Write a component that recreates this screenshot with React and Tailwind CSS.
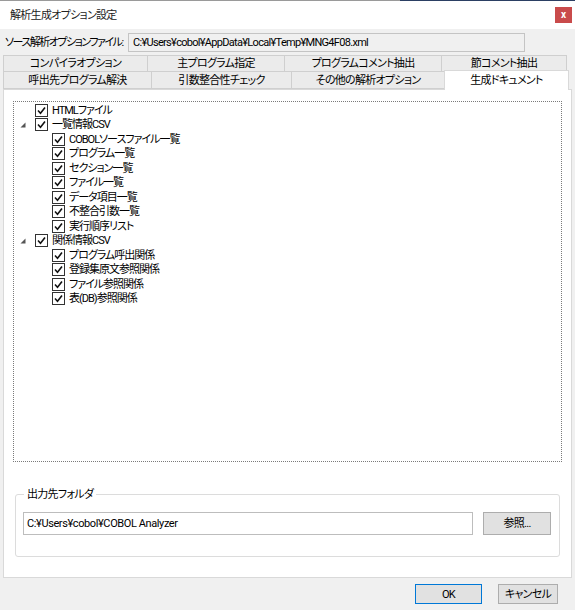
import React from 'react';

const tabsTop = [
  { label: 'コンパイラオプション', w: 'w-[145px]' },
  { label: '主プログラム指定', w: 'w-[138px]' },
  { label: 'プログラムコメント抽出', w: 'w-[158px]' },
  { label: '節コメント抽出', w: 'w-[126px]' },
];

const tabsBottom = [
  { label: '呼出先プログラム解決', w: 'w-[149px]' },
  { label: '引数整合性チェック', w: 'w-[141px]' },
  { label: 'その他の解析オプション', w: 'w-[154px]' },
];

const tree = [
  { label: 'HTMLファイル', level: 0 },
  { label: '一覧情報CSV', level: 0, open: true },
  { label: 'COBOLソースファイル一覧', level: 1 },
  { label: 'プログラム一覧', level: 1 },
  { label: 'セクション一覧', level: 1 },
  { label: 'ファイル一覧', level: 1 },
  { label: 'データ項目一覧', level: 1 },
  { label: '不整合引数一覧', level: 1 },
  { label: '実行順序リスト', level: 1 },
  { label: '関係情報CSV', level: 0, open: true },
  { label: 'プログラム呼出関係', level: 1 },
  { label: '登録集原文参照関係', level: 1 },
  { label: 'ファイル参照関係', level: 1 },
  { label: '表(DB)参照関係', level: 1 },
];

function CheckBox() {
  return (
    <svg width="13" height="13" viewBox="0 0 13 13" className="shrink-0">
      <rect x="0.5" y="0.5" width="12" height="12" fill="#fff" stroke="#333" />
      <path d="M3 6.5 L5.5 9.2 L10 3.6" fill="none" stroke="#111" strokeWidth="1.6" />
    </svg>
  );
}

function Expander() {
  return (
    <svg width="6" height="6" viewBox="0 0 6 6" className="shrink-0">
      <polygon points="5.5,0.5 5.5,5.5 0.5,5.5" fill="#555" />
    </svg>
  );
}

function TreeRow({ item }) {
  if (item.level === 0) {
    return (
      <div className="flex items-center h-[14.5px]">
        <div className="w-[21px] flex justify-start pl-[6px]">
          {item.open ? <Expander /> : null}
        </div>
        <CheckBox />
        <span className="ml-[4px] whitespace-nowrap">{item.label}</span>
      </div>
    );
  }
  return (
    <div className="flex items-center h-[14.5px] pl-[38px]">
      <CheckBox />
      <span className="ml-[4px] whitespace-nowrap">{item.label}</span>
    </div>
  );
}

export default function App() {
  return (
    <div className="w-[575px] h-[610px] bg-[#f0f0f0] flex flex-col overflow-hidden text-[11px] tracking-[-0.7px] text-black font-['Roboto','Noto_Sans_CJK_JP',sans-serif] [font-feature-settings:'palt'] leading-none">
      {/* top edge */}
      <div className="flex h-[1px]">
        <div className="w-[400px] bg-[#9a9a9a]" />
        <div className="flex-1 bg-[#2b3f63]" />
      </div>

      {/* title bar */}
      <div className="h-[28px] bg-white flex items-center justify-between pl-[10px] pr-[3px]">
        <span className="text-[#222]">解析生成オプション設定</span>
        <button className="w-[17px] h-[16px] bg-[#c94b4b] text-white text-[10px] tracking-normal flex items-center justify-center font-bold">
          x
        </button>
      </div>

      <div className="flex-1 flex flex-col px-[3px]">
        {/* source option file */}
        <div className="flex items-center h-[19px] mt-[4px]">
          <span className="ml-[2px] w-[123px] whitespace-nowrap tracking-[-1.5px]">ソース解析オプションファイル:</span>
          <div className="w-[397px] h-[19px] border border-[#c4c4c4] bg-[#f0f0f0] flex items-center px-[4px] whitespace-nowrap">
            C:¥Users¥cobol¥AppData¥Local¥Temp¥MNG4F08.xml
          </div>
        </div>

        {/* tabs */}
        <div className="mt-[3px] flex h-[17px]">
          {tabsTop.map((t) => (
            <div
              key={t.label}
              className={`${t.w} h-full border border-[#cfcfcf] -ml-px first:ml-0 bg-[#ebebeb] flex items-center justify-center whitespace-nowrap`}
            >
              {t.label}
            </div>
          ))}
        </div>
        <div className="flex h-[17px] items-end">
          {tabsBottom.map((t) => (
            <div
              key={t.label}
              className={`${t.w} h-full border border-[#cfcfcf] border-t-0 -ml-px first:ml-0 bg-[#ebebeb] flex items-center justify-center whitespace-nowrap`}
            >
              {t.label}
            </div>
          ))}
          <div className="w-[125px] h-[20px] -mb-px bg-white border border-[#d9d9d9] border-b-0 -ml-px relative z-10 flex items-start pt-[4px] justify-center whitespace-nowrap">
            生成ドキュメント
          </div>
        </div>

        {/* tab page */}
        <div className="h-[489px] bg-white border border-[#d9d9d9] flex flex-col px-[9px] pt-[11px]">
          <div className="h-[361px] border border-dotted border-[#7a7a7a] pt-[1px] tracking-[-1px]">
            {tree.map((item) => (
              <TreeRow key={item.label} item={item} />
            ))}
          </div>

          <fieldset className="mt-[27px] mx-[2px] h-[68px] border border-[#dcdcdc] rounded-[3px] px-[7px]">
            <legend className="ml-[1px] px-[3px]">出力先フォルダ</legend>
            <div className="flex items-center gap-[10px] mt-[12px]">
              <div className="w-[450px] h-[23px] bg-white border border-[#bdbdbd] flex items-center px-[3px] whitespace-nowrap tracking-[-0.4px]">
                C:¥Users¥cobol¥COBOL Analyzer
              </div>
              <button className="w-[68px] h-[23px] bg-[#e1e1e1] border border-[#adadad] flex items-center justify-center">
                参照...
              </button>
            </div>
          </fieldset>
        </div>

        {/* footer buttons */}
        <div className="flex-1 flex items-center justify-end gap-[16px] pr-[14px]">
          <button className="w-[67px] h-[20px] bg-[#e1e1e1] border border-[#0078d7] flex items-center justify-center">
            OK
          </button>
          <button className="w-[60px] h-[20px] bg-[#e1e1e1] border border-[#adadad] flex items-center justify-center">
            キャンセル
          </button>
        </div>
      </div>
    </div>
  );
}
